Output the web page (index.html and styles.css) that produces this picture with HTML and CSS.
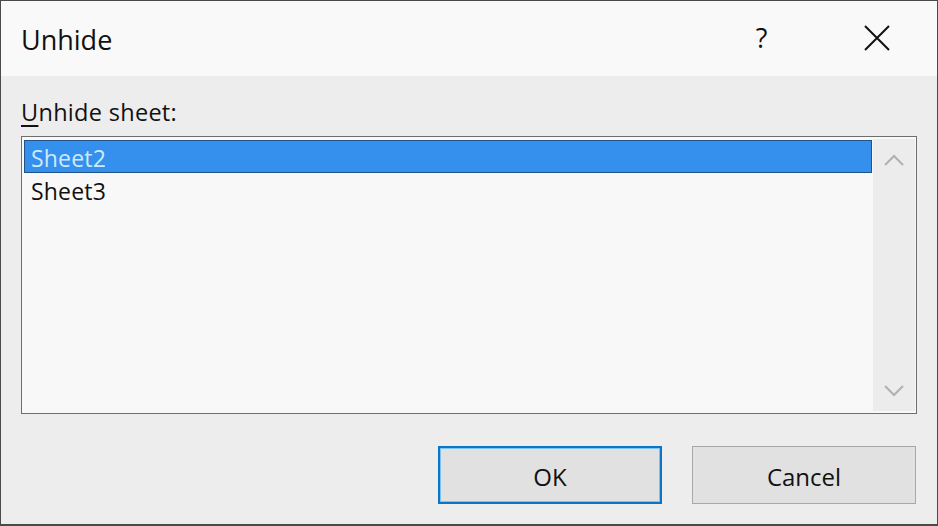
FILE: index.html
```html
<!DOCTYPE html>
<html>
<head>
<meta charset="utf-8">
<link rel="stylesheet" href="styles.css">
</head>
<body>
<div class="window">
  <div class="titlebar">
    <div class="title">Unhide</div>
    <div class="tb-buttons">
      <div class="tb-help">?</div>
      <div class="tb-close">
        <svg width="26" height="26" viewBox="0 0 26 26"><path d="M1 1 L25 25 M25 1 L1 25" stroke="#111" stroke-width="2" fill="none"/></svg>
      </div>
    </div>
  </div>
  <div class="content">
    <div class="label"><span class="ul">U</span>nhide sheet:</div>
    <div class="listbox">
      <div class="items">
        <div class="item selected">Sheet2</div>
        <div class="item">Sheet3</div>
      </div>
      <div class="scrollbar">
        <svg class="arrow" width="20" height="12" viewBox="0 0 20 12"><path d="M1 11 L10 2 L19 11" stroke="#b0b0b0" stroke-width="2" fill="none"/></svg>
        <svg class="arrow" width="20" height="12" viewBox="0 0 20 12"><path d="M1 1 L10 10 L19 1" stroke="#b0b0b0" stroke-width="2" fill="none"/></svg>
      </div>
    </div>
    <div class="buttons">
      <div class="btn btn-default">OK</div>
      <div class="btn">Cancel</div>
    </div>
  </div>
</div>
</body>
</html>
```
FILE: styles.css
```css
html, body {
  margin: 0;
  padding: 0;
  background: #eeeded;
}
.window {
  width: 938px;
  height: 526px;
  box-sizing: border-box;
  border: 1px solid #4a4a4a;
  border-bottom-width: 2px;
  background: #eeeded;
  display: flex;
  flex-direction: column;
  font-family: "Open Sans", "Noto Sans", sans-serif;
  color: #111;
}
.titlebar {
  height: 75px;
  background: #f9f9f9;
  display: flex;
  align-items: center;
  justify-content: space-between;
  padding-left: 20px;
  padding-right: 3px;
  flex-shrink: 0;
}
.title {
  font-size: 27px;
  line-height: 1;
  margin-top: 2px;
}
.tb-buttons {
  display: flex;
  align-items: center;
  height: 100%;
}
.tb-help {
  width: 115px;
  text-align: center;
  font-size: 27px;
  margin-top: -2px;
}
.tb-close {
  width: 115px;
  display: flex;
  justify-content: center;
  align-items: center;
  margin-top: -2px;
}
.content {
  flex: 1;
  display: flex;
  flex-direction: column;
  padding: 0 20px 0 20px;
}
.label {
  font-size: 23.5px;
  line-height: 32px;
  margin-top: 20px;
  letter-spacing: 0.3px;
}
.ul {
  text-decoration: underline;
  text-underline-offset: 4px;
  text-decoration-thickness: 2px;
}
.listbox {
  margin-top: 8px;
  height: 278px;
  box-sizing: border-box;
  border: 1px solid #6e6e6e;
  background: #f8f8f8;
  display: flex;
  padding: 2px 1px 2px 2px;
}
.items {
  flex: 1;
  display: flex;
  flex-direction: column;
  padding-top: 1px;
}
.item {
  height: 33px;
  box-sizing: border-box;
  padding-left: 6px;
  padding-top: 2px;
  font-size: 23px;
  line-height: 30px;
  border: 1px solid transparent;
  letter-spacing: 0.2px;
}
.item.selected {
  background: #3490ec;
  border-color: #22528a;
  color: #cfe9fb;
}
.scrollbar {
  width: 42px;
  margin-left: 1px;
  background: #ececec;
  display: flex;
  flex-direction: column;
  justify-content: space-between;
  align-items: center;
  padding: 15px 0 14px;
}
.buttons {
  display: flex;
  justify-content: flex-end;
  gap: 30px;
  margin-top: 32px;
  margin-right: 1px;
}
.btn {
  width: 224px;
  height: 58px;
  box-sizing: border-box;
  border: 1px solid #a8a8a8;
  background: #e1e1e1;
  display: flex;
  align-items: center;
  justify-content: center;
  font-size: 24px;
  padding-top: 3px;
}
.btn-default {
  border: 2px solid #0a74c6;
  box-shadow: inset 0 0 0 1px #7cc2ee;
}
```
